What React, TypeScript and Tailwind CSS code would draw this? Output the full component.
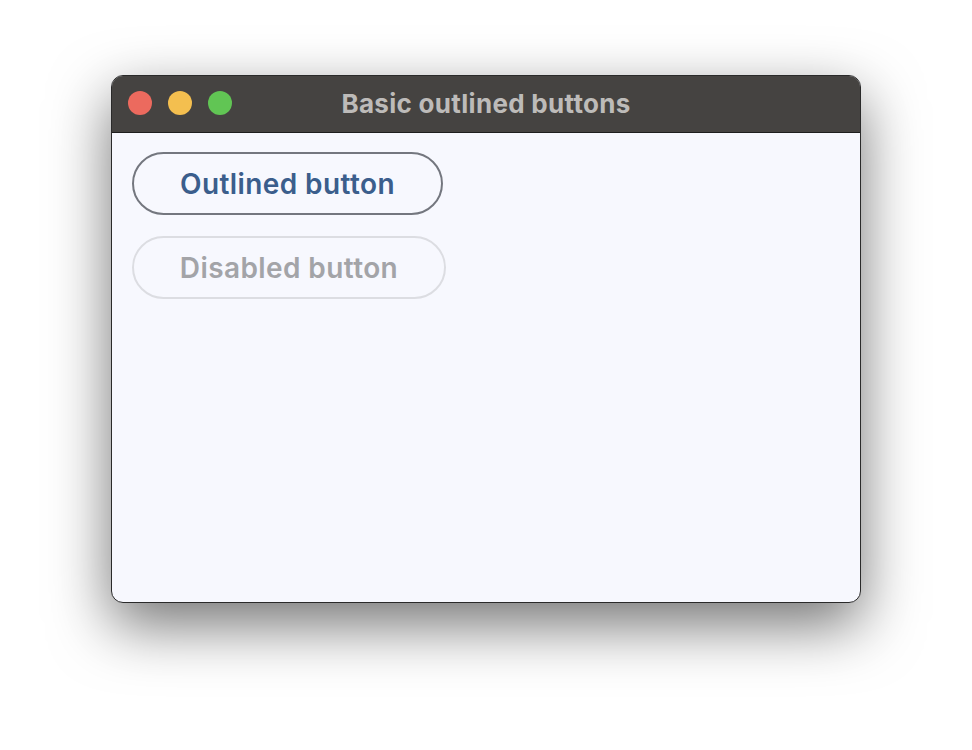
export default function App() {
  return (
    <div className="w-[972px] h-[750px] bg-white pt-[75px] pl-[111px]" style={{ fontFamily: 'Inter, "Noto Sans", sans-serif' }}>
      <div className="w-[750px] h-[528px] rounded-[12px] border border-[#2a2a2a] bg-[#f7f8fe] overflow-hidden shadow-[0_22px_60px_rgba(0,0,0,0.55)] flex flex-col">
        <div className="relative h-[57px] shrink-0 bg-[#454341] border-b border-[#1e1e1e] flex items-center justify-center">
          <div className="absolute left-[16px] top-[15px] flex gap-[16px]">
            <span className="w-[24px] h-[24px] rounded-full bg-[#ec6a5e]" />
            <span className="w-[24px] h-[24px] rounded-full bg-[#f4bf4f]" />
            <span className="w-[24px] h-[24px] rounded-full bg-[#61c554]" />
          </div>
          <span className="text-[26px] font-bold text-[#bdbbb9] tracking-[0.3px] pb-[2px]">Basic outlined buttons</span>
        </div>
        <div className="flex flex-col items-start gap-[21px] pt-[19px] pl-[20px]">
          <button className="w-[311px] h-[63px] rounded-full border-2 border-[#74777f] text-[28px] font-semibold tracking-[0.4px] text-[#3b5e8c] flex items-center justify-center">
            Outlined button
          </button>
          <button disabled className="w-[314px] h-[63px] rounded-full border-2 border-[#dcdde2] text-[28px] font-semibold tracking-[0.4px] text-[#a3a4a8] flex items-center justify-center">
            Disabled button
          </button>
        </div>
      </div>
    </div>
  )
}
